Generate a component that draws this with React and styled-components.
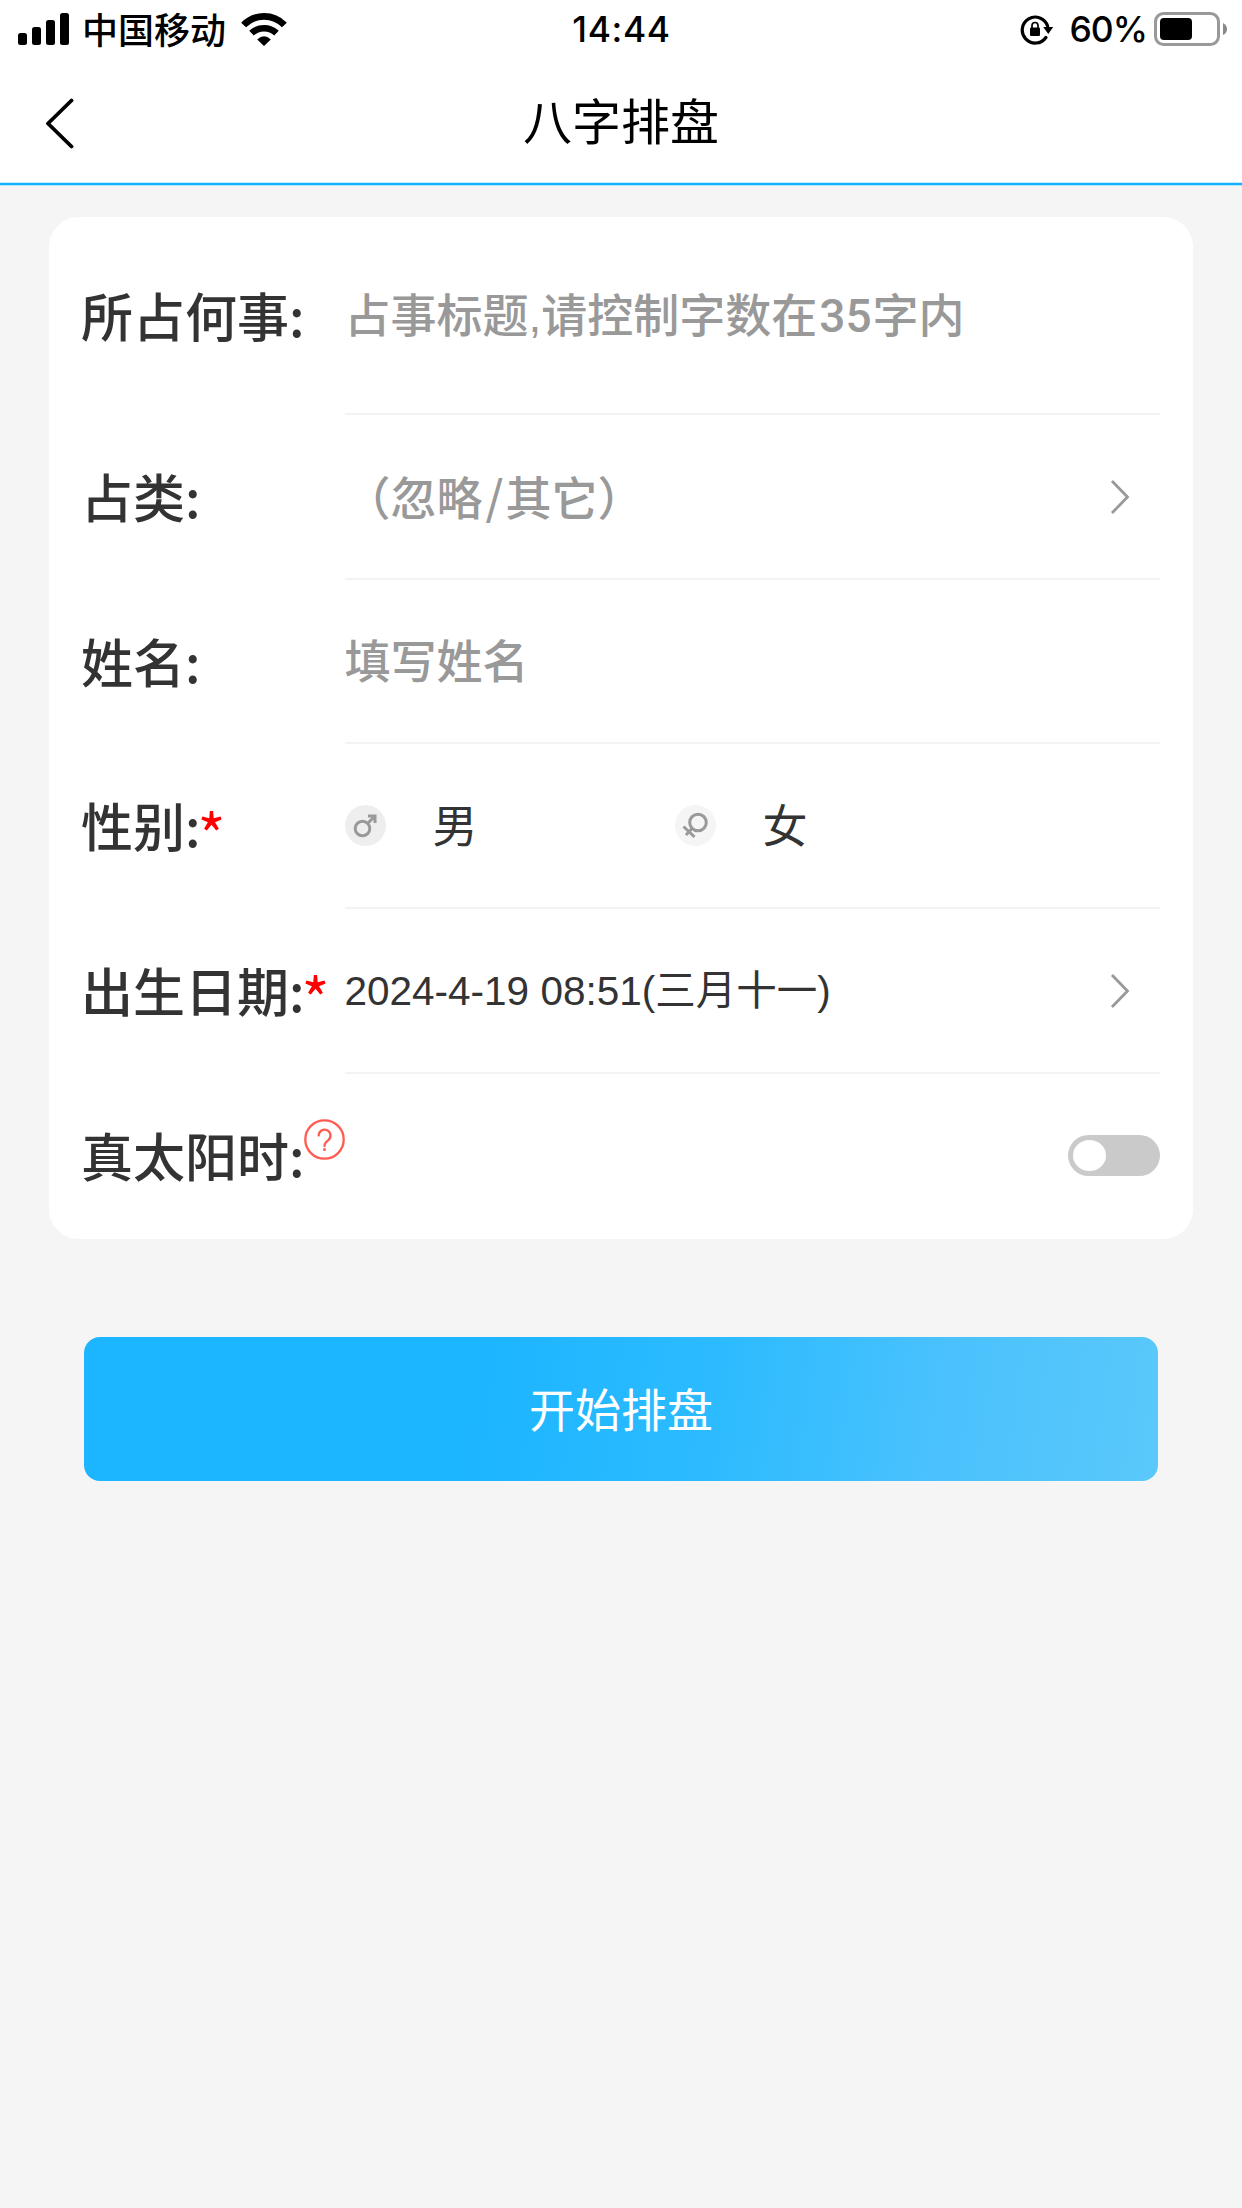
import { useState } from "react";
import styled, { createGlobalStyle } from "styled-components";

const GlobalStyle = createGlobalStyle`
  * {
    box-sizing: border-box;
  }

  body {
    margin: 0;
    background: #f5f5f5;
    color: #333;
    font-family: "Liberation Sans", "Noto Sans CJK SC", sans-serif;
  }
`;

const Page = styled.div`
  width: 1242px;
  min-height: 2208px;
  display: flex;
  flex-direction: column;
`;

const StatusBar = styled.div`
  height: 60px;
  padding: 0 13px 0 18px;
  background: #fff;
  color: #000;
  display: grid;
  grid-template-columns: 1fr auto 1fr;
  align-items: start;
`;

const StatusSide = styled.div`
  display: flex;
  align-items: flex-start;
  justify-content: ${({ $end }) => ($end ? "flex-end" : "flex-start")};
`;

const Carrier = styled.span`
  margin: 0 14px 0 13px;
  font: 500 36px/56px "Noto Sans CJK SC", sans-serif;
`;

const Clock = styled.span`
  padding-right: 4px;
  font: 500 35.5px/59px Inter, sans-serif;
  letter-spacing: 0.6px;
`;

const Percent = styled.span`
  margin: 0 7px 0 15px;
  font: 500 35.5px/59px Inter, sans-serif;
  letter-spacing: -1px;
`;

const StatusIcon = styled.svg`
  display: block;
  flex: none;
  height: 60px;
`;

const NavBar = styled.header`
  height: 125px;
  padding: 0 45px;
  background: #fff;
  border-bottom: 2px solid #12b1ff;
  box-shadow: 0 1px 0 #b5e6ff, inset 0 -1px 0 #c4ebff;
  display: grid;
  grid-template-columns: 1fr auto 1fr;
  align-items: center;
`;

const BackButton = styled.button`
  width: 32px;
  height: 54px;
  padding: 2px 0 0;
  border: 0;
  background: none;

  svg {
    display: block;
  }
`;

const Title = styled.h1`
  margin: 0;
  padding-bottom: 6px;
  color: #000;
  font: 400 49px/72px "Noto Sans CJK SC", sans-serif;
`;

const Card = styled.main`
  margin: 32px 49px 0;
  padding: 0 33px 0 32px;
  background: #fff;
  border-radius: 30px;
`;

const Row = styled.div`
  height: ${({ $height }) => $height || 164.7}px;
  display: flex;
`;

const Label = styled.div`
  width: 263.500px;
  padding-bottom: 3px;
  flex: none;
  display: flex;
  align-items: center;
  white-space: nowrap;
  font: 500 52px/76px "Noto Sans CJK SC", sans-serif;
`;

const Required = styled.span`
  margin-left: -3px;
  padding-top: 15px;
  color: #ff0000;
  font-size: 60px;
  font-weight: 400;
`;

const HelpButton = styled.button`
  width: 41px;
  height: 41px;
  margin: 0 0 31px -1px;
  padding: 0;
  border: 0;
  background: none;

  svg {
    display: block;
  }
`;

const Field = styled.div`
  flex: 1;
  display: flex;
  align-items: center;
  justify-content: ${({ $end }) => ($end ? "flex-end" : "flex-start")};
  border-bottom: ${({ $last }) => ($last ? "0" : "2px solid #f3f3f3")};
`;

const Placeholder = styled.span`
  flex: 1;
  padding-top: 2px;
  color: #999;
  font-size: 46px;
  font-weight: 500;
  line-height: 64px;
`;

const Digits = styled.span`
  margin: 0 1px 0 2px;
  font-family: Roboto, sans-serif;
`;

const Slash = styled.span`
  margin: 0 2px 0 3px;
  font-family: "Noto Sans CJK SC", sans-serif;
`;

const DateValue = styled.span`
  flex: 1;
  padding-top: 2px;
  font-size: 40.5px;
  line-height: 60px;
`;

const ArrowIcon = styled.svg`
  display: block;
  margin: 2px 30px 0 0;
`;

const Option = styled.div`
  width: 330px;
  display: flex;
  align-items: center;
  gap: 47px;
`;

const OptionText = styled.span`
  padding-top: 5px;
  font-size: 45px;
  line-height: 62px;
`;

const Badge = styled.svg`
  display: block;
  border-radius: 50%;
  background: ${({ $bg }) => $bg};
`;

const Toggle = styled.button`
  width: 92px;
  height: 41px;
  margin-bottom: 2px;
  padding: 0 5px;
  border: 0;
  border-radius: 21px;
  background: ${({ $on }) => ($on ? "#1cb5ff" : "#cacaca")};
  display: flex;
  align-items: center;
  justify-content: ${({ $on }) => ($on ? "flex-end" : "flex-start")};
`;

const Knob = styled.span`
  width: 33px;
  height: 31px;
  border-radius: 50%;
  background: #fff;
`;

const SubmitButton = styled.button`
  height: 144px;
  margin: 98px 84px 0;
  padding: 5px 0 0;
  border: 0;
  border-radius: 16px;
  background: linear-gradient(98deg, #1cb5ff 0%, #1cb5ff 36%, #2dbbff 59%, #4bc2fd 80%, #5ac8fa 100%);
  color: #fff;
  font: 400 46px/66px "Liberation Sans", "Noto Sans CJK SC", sans-serif;
`;

const Arrow = () => (
  <ArrowIcon width="20" height="38" viewBox="0 0 20 38" fill="none">
    <path d="M2 3L17.500 19L2 35" stroke="#999" strokeWidth="2.800" />
  </ArrowIcon>
);

const Signal = () => (
  <StatusIcon width="51" viewBox="0 0 51 60">
    <rect x="0" y="33" width="9" height="12" rx="2.500" />
    <rect x="14" y="27" width="9" height="18" rx="2.500" />
    <rect x="28" y="20" width="9" height="25" rx="2.500" />
    <rect x="42" y="13" width="9" height="32" rx="2.500" />
  </StatusIcon>
);

const Wifi = () => (
  <StatusIcon width="48" viewBox="0 0 48 60" fill="none" stroke="#000">
    <path d="M3.600 25A28.500 28.500 0 0 1 44.400 25" strokeWidth="6.800" />
    <path d="M11.500 33.200A18 18 0 0 1 36.500 33.200" strokeWidth="6.500" />
    <path d="M17.200 39.500Q24 33 30.800 39.500L24 46Z" fill="#000" stroke="none" />
  </StatusIcon>
);

const RotationLock = () => (
  <StatusIcon width="34" viewBox="0 0 34 60" fill="none">
    <path d="M25.900 37.500A13 13 0 1 1 27.600 26" stroke="#000" strokeWidth="3.200" strokeLinecap="round" />
    <path d="M23.200 27H33.200L28.300 34Z" fill="#000" />
    <rect x="10" y="27.500" width="10" height="8.500" rx="1.200" fill="#000" />
    <path d="M12 28.500V25.500a3 3 0 0 1 6 0V28.500" stroke="#000" strokeWidth="1.700" />
  </StatusIcon>
);

const Battery = () => (
  <StatusIcon width="75" viewBox="0 0 75 60">
    <rect x="1.500" y="13.500" width="63" height="31" rx="8" fill="none" stroke="#999" strokeWidth="3" />
    <rect x="6" y="18" width="32" height="22" rx="4" />
    <path d="M69 23Q73 25 73 29T69 35Z" fill="#888" />
  </StatusIcon>
);

const Male = () => (
  <Badge $bg="#eee" width="41" height="41" viewBox="0 0 41 41" fill="none" stroke="#999" strokeWidth="3">
    <circle cx="17.500" cy="23.500" r="7.300" />
    <path d="M23 18L29.500 11.500M23 11H30V18" />
  </Badge>
);

const Female = () => (
  <Badge $bg="#f5f5f5" width="41" height="41" viewBox="0 0 41 41" fill="none" stroke="#999" strokeWidth="3">
    <circle cx="23" cy="17.500" r="8.300" />
    <path d="M17 23.500L11 30M8.500 21.500L19.500 32" />
  </Badge>
);

const App = () => {
  const [solarTime, setSolarTime] = useState(false);

  return (
    <Page>
      <GlobalStyle />
      <StatusBar>
        <StatusSide>
          <Signal />
          <Carrier>中国移动</Carrier>
          <Wifi />
        </StatusSide>
        <Clock>14:44</Clock>
        <StatusSide $end>
          <RotationLock />
          <Percent>60%</Percent>
          <Battery />
        </StatusSide>
      </StatusBar>

      <NavBar>
        <BackButton aria-label="返回">
          <svg width="32" height="52" viewBox="0 0 32 52" fill="none">
            <path
              d="M26.500 3.500L3 26.500L26.500 49.500"
              stroke="#000"
              strokeWidth="3.800"
              strokeLinecap="round"
              strokeLinejoin="round"
            />
          </svg>
        </BackButton>
        <Title>八字排盘</Title>
      </NavBar>

      <Card>
        <Row $height={198}>
          <Label>所占何事:</Label>
          <Field>
            <Placeholder>
              占事标题,请控制字数在<Digits>35</Digits>字内
            </Placeholder>
          </Field>
        </Row>
        <Row>
          <Label>占类:</Label>
          <Field>
            <Placeholder>
              （忽略<Slash>/</Slash>其它）
            </Placeholder>
            <Arrow />
          </Field>
        </Row>
        <Row>
          <Label>姓名:</Label>
          <Field>
            <Placeholder>填写姓名</Placeholder>
          </Field>
        </Row>
        <Row>
          <Label>
            性别:<Required>*</Required>
          </Label>
          <Field>
            <Option>
              <Male />
              <OptionText>男</OptionText>
            </Option>
            <Option>
              <Female />
              <OptionText>女</OptionText>
            </Option>
          </Field>
        </Row>
        <Row>
          <Label>
            出生日期:<Required>*</Required>
          </Label>
          <Field>
            <DateValue>2024-4-19 08:51(三月十一)</DateValue>
            <Arrow />
          </Field>
        </Row>
        <Row $height={165.2}>
          <Label>
            真太阳时:
            <HelpButton aria-label="说明">
              <svg width="41" height="41" viewBox="0 0 41 41" fill="none" stroke="#ff5b50" strokeWidth="2.300">
                <circle cx="20.500" cy="20.500" r="19.200" />
                <path d="M14.700 16.500a5.900 5.900 0 1 1 9.600 4.600Q20.500 24 20.500 27" strokeLinecap="round" />
                <circle cx="20.500" cy="30.500" r="1.500" fill="#ff5b50" stroke="none" />
              </svg>
            </HelpButton>
          </Label>
          <Field $end $last>
            <Toggle $on={solarTime} onClick={() => setSolarTime(!solarTime)} aria-label="真太阳时">
              <Knob />
            </Toggle>
          </Field>
        </Row>
      </Card>

      <SubmitButton>开始排盘</SubmitButton>
    </Page>
  );
};

export default App;
